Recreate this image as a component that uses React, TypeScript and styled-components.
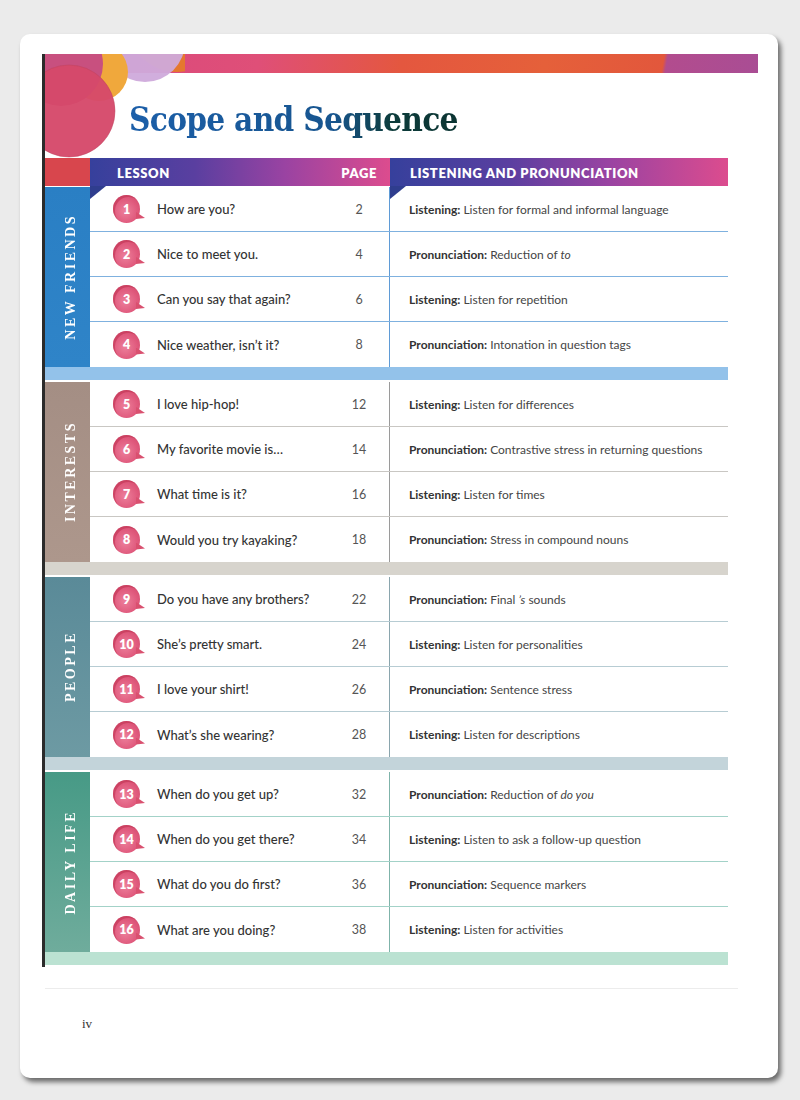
import React from "react";
import styled, { createGlobalStyle } from "styled-components";

const Global = createGlobalStyle`
  html, body { margin: 0; padding: 0; background: #ebebeb; }
  body { font-family: "Lato", "Open Sans", sans-serif; }
`;

type Tone = { side: string; band: string; line: string; divider: string };

type Lesson = { n: number; title: string; page: number; kind: string; desc: React.ReactNode };

const sections: { label: string; tone: Tone; lessons: Lesson[] }[] = [
  {
    label: "NEW FRIENDS",
    tone: { side: "linear-gradient(180deg,#2a7fc4,#2f84c8)", band: "#93c2ea", line: "#7fb1df", divider: "#5f9bd6" },
    lessons: [
      { n: 1, title: "How are you?", page: 2, kind: "Listening:", desc: "Listen for formal and informal language" },
      { n: 2, title: "Nice to meet you.", page: 4, kind: "Pronunciation:", desc: <>Reduction of <i>to</i></> },
      { n: 3, title: "Can you say that again?", page: 6, kind: "Listening:", desc: "Listen for repetition" },
      { n: 4, title: "Nice weather, isn’t it?", page: 8, kind: "Pronunciation:", desc: "Intonation in question tags" },
    ],
  },
  {
    label: "INTERESTS",
    tone: { side: "linear-gradient(180deg,#a48e84,#ad978c)", band: "#d7d4cd", line: "#c9c7c3", divider: "#9a9a9a" },
    lessons: [
      { n: 5, title: "I love hip-hop!", page: 12, kind: "Listening:", desc: "Listen for differences" },
      { n: 6, title: "My favorite movie is…", page: 14, kind: "Pronunciation:", desc: "Contrastive stress in returning questions" },
      { n: 7, title: "What time is it?", page: 16, kind: "Listening:", desc: "Listen for times" },
      { n: 8, title: "Would you try kayaking?", page: 18, kind: "Pronunciation:", desc: "Stress in compound nouns" },
    ],
  },
  {
    label: "PEOPLE",
    tone: { side: "linear-gradient(180deg,#5a8a98,#6d9aa3)", band: "#c3d4da", line: "#b7ccd3", divider: "#8aa5ad" },
    lessons: [
      { n: 9, title: "Do you have any brothers?", page: 22, kind: "Pronunciation:", desc: <>Final <i>’s</i> sounds</> },
      { n: 10, title: "She’s pretty smart.", page: 24, kind: "Listening:", desc: "Listen for personalities" },
      { n: 11, title: "I love your shirt!", page: 26, kind: "Pronunciation:", desc: "Sentence stress" },
      { n: 12, title: "What’s she wearing?", page: 28, kind: "Listening:", desc: "Listen for descriptions" },
    ],
  },
  {
    label: "DAILY LIFE",
    tone: { side: "linear-gradient(180deg,#479a86,#6fac9c)", band: "#bbe2d2", line: "#a3d2c8", divider: "#7fb3aa" },
    lessons: [
      { n: 13, title: "When do you get up?", page: 32, kind: "Pronunciation:", desc: <>Reduction of <i>do you</i></> },
      { n: 14, title: "When do you get there?", page: 34, kind: "Listening:", desc: "Listen to ask a follow-up question" },
      { n: 15, title: "What do you do first?", page: 36, kind: "Pronunciation:", desc: "Sequence markers" },
      { n: 16, title: "What are you doing?", page: 38, kind: "Listening:", desc: "Listen for activities" },
    ],
  },
];

const Frame = styled.div`
  padding: 34px 22px 22px 20px;
`;

const Card = styled.div`
  width: 758px;
  height: 1044px;
  box-sizing: border-box;
  background: #ffffff;
  border-radius: 10px;
  box-shadow: 3px 4px 5px rgba(0, 0, 0, 0.55);
  padding: 20px 0 0 22px;
  overflow: hidden;
`;

const Sheet = styled.div`
  position: relative;
  width: 716px;
  box-sizing: border-box;
  border-left: 3px solid #2b2b2b;
`;

const Stripe = styled.div`
  height: 19px;
  background: linear-gradient(
    100deg,
    #d8477f 0%,
    #df4f78 30%,
    #e4573f 50%,
    #e5603a 70%,
    #e2573c 86.5%,
    #b24c8e 87%,
    #a94d94 100%
  );
`;

const Decor = styled.svg`
  position: absolute;
  left: 0;
  top: 0;
  pointer-events: none;
`;

const TitleRow = styled.div`
  height: 85px;
  box-sizing: border-box;
  padding: 27px 0 0 84px;
`;

const Title = styled.h1`
  margin: 0;
  font-family: "DejaVu Serif Condensed", "DejaVu Serif", serif;
  font-weight: 700;
  font-size: 33px;
  line-height: 40px;
  letter-spacing: -0.7px;
  display: inline-block;
  background: linear-gradient(90deg, #1c5fa9 0%, #17558f 62%, #0d3c3b 80%, #0b3432 100%);
  -webkit-background-clip: text;
  background-clip: text;
  color: transparent;
`;

const HeaderRow = styled.div`
  display: grid;
  grid-template-columns: 45px 300px 338px;
  height: 28px;
  margin-bottom: 1px;
`;

const RedBlock = styled.div`
  background: #d8464d;
`;

const HeadCell = styled.div<{ $pl: number; $pr?: number }>`
  position: relative;
  display: flex;
  align-items: center;
  justify-content: space-between;
  padding: 1px ${(p) => p.$pr ?? 0}px 0 ${(p) => p.$pl}px;
  background: linear-gradient(90deg, #36409c 0%, #5a3fa0 35%, #9a43a2 65%, #dc4c8e 100%);
  color: #ffffff;
  font-family: "Lato", sans-serif;
  font-weight: 800;
  font-size: 13px;
  letter-spacing: 0.6px;
  z-index: 1;
  &::after {
    content: "";
    position: absolute;
    left: 0;
    top: 100%;
    width: 0;
    height: 0;
    border-top: 13px solid #2f3d8e;
    border-right: 16px solid transparent;
  }
`;

const SectionGrid = styled.div`
  display: grid;
  grid-template-columns: 45px 638px;
`;

const SideLabel = styled.div<{ $bg: string }>`
  height: 180px;
  background: ${(p) => p.$bg};
  display: flex;
  align-items: center;
  justify-content: center;
  padding-left: 7px;
  box-sizing: border-box;
`;

const SideText = styled.span`
  writing-mode: vertical-rl;
  transform: rotate(180deg);
  color: #ffffff;
  font-family: "Liberation Serif", "DejaVu Serif", serif;
  font-weight: 700;
  font-size: 14px;
  letter-spacing: 2.5px;
  white-space: nowrap;
`;

const Rows = styled.div`
  display: flex;
  flex-direction: column;
`;

const Row = styled.div<{ $line: string }>`
  display: grid;
  grid-template-columns: 300px 338px;
  height: 45px;
  box-sizing: border-box;
  border-bottom: 1px solid ${(p) => p.$line};
  &:last-child {
    border-bottom: none;
  }
`;

const LessonCell = styled.div<{ $divider: string }>`
  display: flex;
  align-items: center;
  border-right: 1px solid ${(p) => p.$divider};
  padding-left: 23px;
`;

const Badge = styled.span`
  position: relative;
  flex: none;
  width: 27px;
  height: 28px;
  border-radius: 50%;
  display: inline-flex;
  align-items: center;
  justify-content: center;
  background: radial-gradient(circle at 45% 58%, #ec7f9b 0%, #e05a7d 55%, #cf4466 100%);
  box-shadow: inset 2px 2px 0 rgba(190, 50, 80, 0.55);
  color: #ffffff;
  font-family: "Lato", sans-serif;
  font-weight: 800;
  font-size: 12.5px;
  &::after {
    content: "";
    position: absolute;
    right: -5px;
    bottom: 4px;
    width: 9px;
    height: 7px;
    background: #d9506f;
    clip-path: polygon(0 0, 100% 85%, 0 100%);
  }
`;

const LessonTitle = styled.span`
  flex: 1;
  margin-left: 17px;
  font-family: "Lato", sans-serif;
  font-size: 13px;
  font-weight: 500;
  color: #333333;
  white-space: nowrap;
`;

const PageNum = styled.span`
  width: 40px;
  margin-right: 10px;
  text-align: center;
  font-family: "Lato", sans-serif;
  font-size: 12.5px;
  color: #555555;
`;

const SkillCell = styled.div`
  display: flex;
  align-items: center;
  padding-left: 19px;
  font-family: "Lato", sans-serif;
  font-size: 12px;
  color: #454545;
  white-space: nowrap;
`;

const Kind = styled.b`
  font-weight: 700;
  color: #333333;
  margin-right: 3px;
`;

const Band = styled.div<{ $bg: string }>`
  grid-column: 1 / -1;
  height: 13px;
  margin-bottom: 2px;
  background: ${(p) => p.$bg};
`;

const FooterLine = styled.div`
  margin: 21px 0 0 3px;
  width: 693px;
  height: 1px;
  background: #ececec;
`;

const PageLabel = styled.div`
  margin: 27px 0 0 40px;
  font-family: "Liberation Serif", serif;
  font-size: 13px;
  color: #333333;
`;

function Section({ label, tone, lessons }: { label: string; tone: Tone; lessons: Lesson[] }) {
  return (
    <SectionGrid>
      <SideLabel $bg={tone.side}>
        <SideText>{label}</SideText>
      </SideLabel>
      <Rows>
        {lessons.map((l) => (
          <Row key={l.n} $line={tone.line}>
            <LessonCell $divider={tone.divider}>
              <Badge>{l.n}</Badge>
              <LessonTitle>{l.title}</LessonTitle>
              <PageNum>{l.page}</PageNum>
            </LessonCell>
            <SkillCell>
              <Kind>{l.kind}</Kind>
              <span>{l.desc}</span>
            </SkillCell>
          </Row>
        ))}
      </Rows>
      <Band $bg={tone.band} />
    </SectionGrid>
  );
}

export default function App() {
  return (
    <>
      <Global />
      <Frame>
        <Card>
          <Sheet>
            <Stripe />
            <TitleRow>
              <Title>Scope and Sequence</Title>
            </TitleRow>
            <HeaderRow>
              <RedBlock />
              <HeadCell $pl={27} $pr={13}>
                <span>LESSON</span>
                <span>PAGE</span>
              </HeadCell>
              <HeadCell $pl={20}>
                <span>LISTENING AND PRONUNCIATION</span>
              </HeadCell>
            </HeaderRow>
            {sections.map((s) => (
              <Section key={s.label} {...s} />
            ))}
            <Decor width="140" height="104" viewBox="0 0 140 104">
              <circle cx="132" cy="-32" r="50" fill="#e5782f" />
              <circle cx="100" cy="-12" r="40" fill="#cfaadb" opacity="0.95" />
              <circle cx="54" cy="18" r="29" fill="#f0a83c" />
              <circle cx="16" cy="10" r="42" fill="#c8507f" />
              <circle cx="24" cy="57" r="46" fill="#d5496a" opacity="0.96" />
              <circle cx="24" cy="57" r="46" fill="none" stroke="#c2445f" strokeWidth="1" opacity="0.5" />
            </Decor>
          </Sheet>
          <FooterLine />
          <PageLabel>iv</PageLabel>
        </Card>
      </Frame>
    </>
  );
}
